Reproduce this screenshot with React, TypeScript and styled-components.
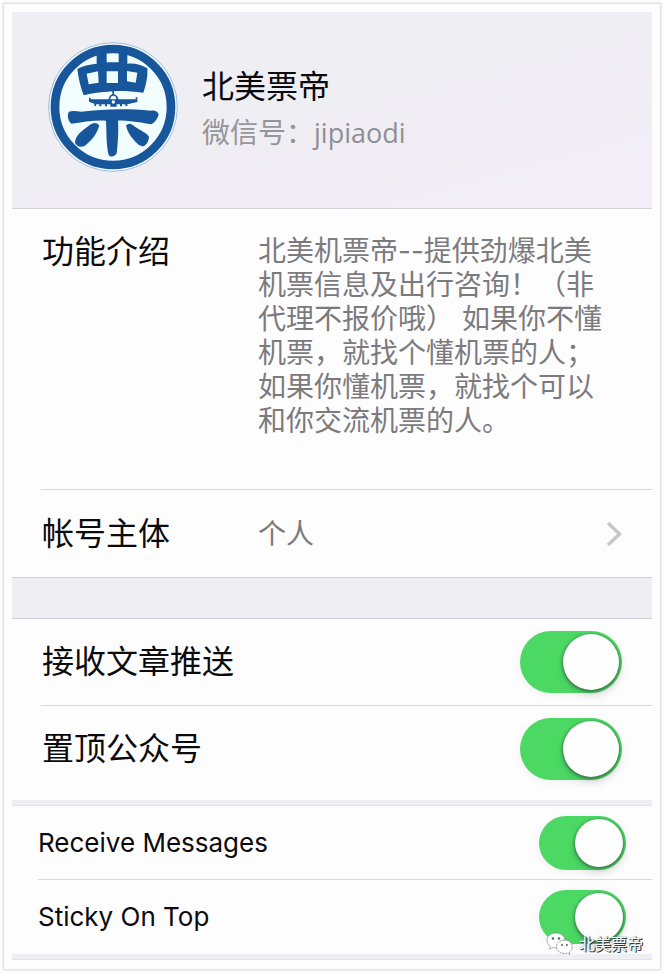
import React, { useId } from "react";
import styled, { createGlobalStyle } from "styled-components";

const GlobalStyle = createGlobalStyle`
  * { box-sizing: border-box; }
  body {
    margin: 0;
    background: #fefefe;
    font-family: Inter, "Noto Sans CJK SC", sans-serif;
    color: #0b0b0d;
    text-spacing-trim: space-all;
  }
`;

const Card = styled.main`
  position: relative;
  margin: 3px 3px 4px;
  padding: 8px 8px 9px;
  background: #fefdfe;
  border: 1px solid #e2e2e4;
  box-shadow: 0 0 3px #dedee2;
`;

const Header = styled.header`
  display: flex;
  align-items: flex-start;
  gap: 24px;
  height: 197px;
  padding: 30px 36px;
  background: linear-gradient(165deg, #efeef3 50%, #f2edf7 85%);
  border-bottom: 1px solid #d2d1d8;
`;

const Identity = styled.div`
  padding-top: 21px;
`;

const Name = styled.h1`
  margin: 0;
  font-size: 32px;
  line-height: 48px;
  font-weight: 400;
`;

const AccountId = styled.p`
  margin: 0;
  font-size: 28px;
  line-height: 44px;
  font-weight: 400;
  color: #96959b;
`;

const Handle = styled.span`
  font-family: "Open Sans", sans-serif;
  font-size: 27px;
  color: #8f8e94;
`;

const Section = styled.section`
  padding-left: 29px;
`;

const InfoRow = styled.div`
  display: grid;
  grid-template-columns: 217px minmax(0, 352px) 1fr;
  align-items: start;
  height: 281px;
  padding-top: 25px;
  border-bottom: 1px solid #d9d9dc;
`;

const RowTitle = styled.h2`
  margin: 0;
  padding-left: 1px;
  font-size: 32px;
  line-height: 36px;
  font-weight: 400;
`;

const Detail = styled.p`
  margin: 0;
  font-size: 28px;
  line-height: 34px;
  font-weight: 400;
  color: #7b7b7e;
`;

const LinkRow = styled.div`
  display: grid;
  grid-template-columns: 217px 1fr auto;
  align-items: center;
  height: 87px;
  padding-right: 30px;
`;

const OpenButton = styled.button`
  display: flex;
  padding: 0;
  border: 0;
  background: none;
  cursor: pointer;
`;

const Divider = styled.div<{ $thin?: boolean }>`
  height: ${(p) => (p.$thin ? "6px" : "42px")};
  background: #efeef3;
  border: solid ${(p) => (p.$thin ? "#e4e4e7" : "#d2d1d8")};
  border-width: ${(p) => (p.$thin ? "0 0 1px" : "1px 0")};
`;

const SwitchSection = styled.section<{ $compact?: boolean }>`
  padding-left: ${(p) => (p.$compact ? "26px" : "29px")};
`;

const SwitchRow = styled.div<{ $compact?: boolean; $last?: boolean }>`
  display: flex;
  align-items: center;
  justify-content: space-between;
  height: ${(p) => (p.$compact ? "74px" : p.$last ? "94px" : "87px")};
  padding-right: ${(p) => (p.$compact ? "26px" : "30px")};
  padding-bottom: ${(p) => (p.$last && !p.$compact ? "8px" : "0")};
  border-bottom: ${(p) => (p.$last ? "0" : "1px solid #d9d9dc")};
`;

const SwitchLabel = styled.label<{ $compact?: boolean }>`
  padding-left: ${(p) => (p.$compact ? "0" : "1px")};
  font-size: ${(p) => (p.$compact ? "26px" : "32px")};
  line-height: 36px;
`;

const Toggle = styled.input<{ $compact?: boolean }>`
  appearance: none;
  display: flex;
  justify-content: flex-start;
  flex: none;
  margin: 0;
  padding: 3px;
  width: ${(p) => (p.$compact ? "87px" : "102px")};
  height: ${(p) => (p.$compact ? "54px" : "62px")};
  border-radius: 31px;
  background: #d9d9dc;
  box-shadow: 0 2px 8px #f0f0f2;
  cursor: pointer;

  &:checked {
    justify-content: flex-end;
    background: #4bd964;
  }

  &::before {
    content: "";
    width: ${(p) => (p.$compact ? "48px" : "56px")};
    height: ${(p) => (p.$compact ? "48px" : "56px")};
    border-radius: 50%;
    background: #fefefe;
    box-shadow: 0 1px 3px 1px rgba(50, 80, 60, 0.65), 0 6px 10px rgba(0, 0, 0, 0.1);
  }
`;

const Watermark = styled.div`
  position: absolute;
  right: 17px;
  bottom: 12px;
  display: flex;
  align-items: center;
  gap: 6px;
  font-size: 16px;
  line-height: 26px;
  color: #fff;
  text-shadow: 1px 1px 0 #3c3c3c, 1px 0 1px #555, 0 0 1px #888;
`;

function Logo() {
  return (
    <svg width="130" height="130" viewBox="144 129 390 390" role="img" aria-label="北美票帝">
      <circle cx="339" cy="324" r="193" fill="#f4fbff" stroke="#6f9fcf" strokeWidth="2" />
      <circle cx="339" cy="324" r="174" fill="#f1fdff" stroke="#17569a" strokeWidth="26" />
      <g fill="#17569a">
        <path
          fillRule="evenodd"
          d="M290 150H320V162H356V150H382V194C404 192 423 196 442 208C444 232 438 258 430 281C388 275 346 275 322 278C295 280 274 283 251 289C242 266 235 237 232 210C248 200 268 196 290 194ZM320 162V190H356V162ZM260 224L266 256L296 251L294 217ZM320 217V252H354V217ZM381 216V247L407 251L412 221Z"
        />
        <path d="M337 276H342V286Q354 290 355 301H407V295H412V309L382 316V321H376V316H366V322H360V316H350V323H331V316H321V322H315V316H304V322H298V316H288V321H283V314L267 308V296H272V301H326Q327 289 337 286Z" />
        <path d="M207 338C219 333 231 338 244 338C306 330 380 328 453 335C463 332 473 337 476 346C474 356 466 371 453 376C405 366 358 363 354 365C356 393 354 429 350 463C345 473 333 476 326 468C318 436 320 398 318 365C282 363 248 370 214 374C204 365 200 347 207 338Z" />
        <path d="M270 377Q286 366 298 379C292 403 276 424 255 440Q235 449 225 432C225 407 250 393 270 377Z" />
        <path d="M378 379Q389 369 401 380C421 395 440 401 447 413Q447 428 434 440Q421 446 411 433C394 416 382 400 378 379Z" />
      </g>
      <path d="M331 301Q331 290 340 290T349 301Z" fill="#f1fdff" />
      <circle cx="340" cy="309" r="5" fill="#f1fdff" />
    </svg>
  );
}

function WeChatMark() {
  return (
    <svg width="27" height="24" viewBox="0 0 27 24" aria-hidden="true">
      <path
        d="M10 1C4.500 1 1 4.300 1 8.500C1 11 2.300 13 4.300 14.300L3.500 17L6.500 15.500Q8.500 16.100 10.500 15.900C15.500 15.600 19 12.600 19 8.500C19 4.300 15 1 10 1Z"
        fill="#fff" stroke="#8a948c" strokeWidth="0.700"
      />
      <path
        d="M18.500 8C14 8 10.500 11 10.500 14.800S14 21.500 18.500 21.500Q20 21.500 21.400 21.100L24 22.600L23.300 20.100C25.200 18.900 26.300 17 26.300 14.800C26.300 11 23 8 18.500 8Z"
        fill="#fff" stroke="#777f79" strokeWidth="0.800" strokeDasharray="2 1"
      />
      <g fill="#56665a">
        <circle cx="7" cy="6.500" r="1.200" />
        <circle cx="13" cy="6.500" r="1.200" />
        <circle cx="16" cy="13" r="1" />
        <circle cx="21" cy="13" r="1" />
      </g>
    </svg>
  );
}

interface SettingProps {
  label: string;
  compact?: boolean;
  last?: boolean;
}

function Setting({ label, compact, last }: SettingProps) {
  const id = useId();
  return (
    <SwitchRow $compact={compact} $last={last}>
      <SwitchLabel htmlFor={id} $compact={compact}>{label}</SwitchLabel>
      <Toggle id={id} type="checkbox" role="switch" defaultChecked $compact={compact} />
    </SwitchRow>
  );
}

export default function App() {
  return (
    <>
      <GlobalStyle />
      <Card lang="zh-CN">
        <Header>
          <Logo />
          <Identity>
            <Name>北美票帝</Name>
            <AccountId>微信号：<Handle>jipiaodi</Handle></AccountId>
          </Identity>
        </Header>
        <Section>
          <InfoRow>
            <RowTitle>功能介绍</RowTitle>
            <Detail>
              北美机票帝--提供劲爆北美机票信息及出行咨询！（非代理不报价哦） 如果你不懂机票，就找个懂机票的人；如果你懂机票，就找个可以和你交流机票的人。
            </Detail>
          </InfoRow>
          <LinkRow>
            <RowTitle>帐号主体</RowTitle>
            <Detail>个人</Detail>
            <OpenButton type="button" aria-label="帐号主体">
              <svg width="16" height="26" viewBox="0 0 16 26" aria-hidden="true">
                <path d="M2 2L13.500 13L2 24" fill="none" stroke="#c7c7cb" strokeWidth="3.500" />
              </svg>
            </OpenButton>
          </LinkRow>
        </Section>
        <Divider />
        <SwitchSection>
          <Setting label="接收文章推送" />
          <Setting label="置顶公众号" last />
        </SwitchSection>
        <Divider $thin />
        <SwitchSection $compact>
          <Setting label="Receive Messages" compact />
          <Setting label="Sticky On Top" compact last />
        </SwitchSection>
        <Divider $thin />
        <Watermark>
          <WeChatMark />
          北美票帝
        </Watermark>
      </Card>
    </>
  );
}
